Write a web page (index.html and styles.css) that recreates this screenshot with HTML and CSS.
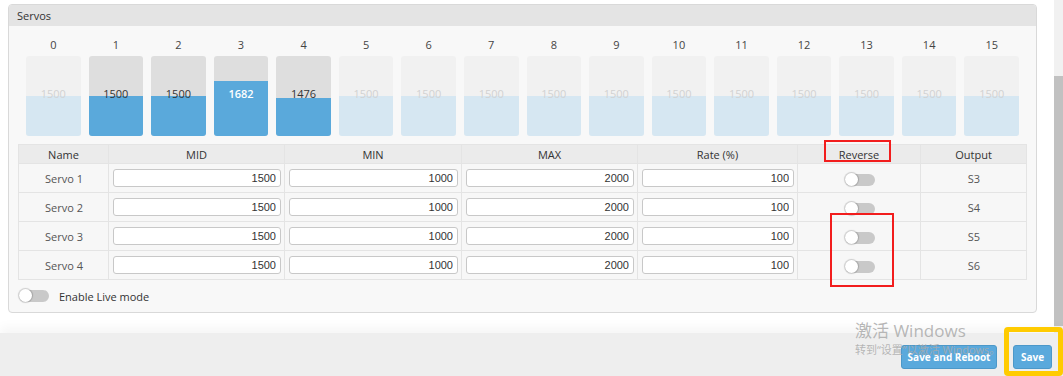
FILE: index.html
```html
<!DOCTYPE html>
<html lang="en">
<head>
<meta charset="UTF-8">
<meta name="viewport" content="width=device-width, initial-scale=1.0">
<title>Servos</title>
<link rel="stylesheet" href="styles.css">
</head>
<body>

  <div class="app">
    <main class="content">
      <section class="panel">
        <div class="panel-head">Servos</div>
        <div class="panel-body">

          <div class="bars">
            <div class="bar-col"><span class="ch">0</span><div class="bar"><div class="fill" style="height:50%"></div><span class="val">1500</span></div></div>
            <div class="bar-col"><span class="ch">1</span><div class="bar on"><div class="fill" style="height:50%"></div><span class="val">1500</span></div></div>
            <div class="bar-col"><span class="ch">2</span><div class="bar on"><div class="fill" style="height:50%"></div><span class="val">1500</span></div></div>
            <div class="bar-col"><span class="ch">3</span><div class="bar on high"><div class="fill" style="height:68.2%"></div><span class="val">1682</span></div></div>
            <div class="bar-col"><span class="ch">4</span><div class="bar on"><div class="fill" style="height:47.6%"></div><span class="val">1476</span></div></div>
            <div class="bar-col"><span class="ch">5</span><div class="bar"><div class="fill" style="height:50%"></div><span class="val">1500</span></div></div>
            <div class="bar-col"><span class="ch">6</span><div class="bar"><div class="fill" style="height:50%"></div><span class="val">1500</span></div></div>
            <div class="bar-col"><span class="ch">7</span><div class="bar"><div class="fill" style="height:50%"></div><span class="val">1500</span></div></div>
            <div class="bar-col"><span class="ch">8</span><div class="bar"><div class="fill" style="height:50%"></div><span class="val">1500</span></div></div>
            <div class="bar-col"><span class="ch">9</span><div class="bar"><div class="fill" style="height:50%"></div><span class="val">1500</span></div></div>
            <div class="bar-col"><span class="ch">10</span><div class="bar"><div class="fill" style="height:50%"></div><span class="val">1500</span></div></div>
            <div class="bar-col"><span class="ch">11</span><div class="bar"><div class="fill" style="height:50%"></div><span class="val">1500</span></div></div>
            <div class="bar-col"><span class="ch">12</span><div class="bar"><div class="fill" style="height:50%"></div><span class="val">1500</span></div></div>
            <div class="bar-col"><span class="ch">13</span><div class="bar"><div class="fill" style="height:50%"></div><span class="val">1500</span></div></div>
            <div class="bar-col"><span class="ch">14</span><div class="bar"><div class="fill" style="height:50%"></div><span class="val">1500</span></div></div>
            <div class="bar-col"><span class="ch">15</span><div class="bar"><div class="fill" style="height:50%"></div><span class="val">1500</span></div></div>
          </div>

          <table class="servo-table">
            <thead>
              <tr>
                <th class="c-name">Name</th>
                <th class="c-mid">MID</th>
                <th class="c-min">MIN</th>
                <th class="c-max">MAX</th>
                <th class="c-rate">Rate (%)</th>
                <th class="c-rev">Reverse</th>
                <th>Output</th>
              </tr>
            </thead>
            <tbody>
              <tr>
                <td>Servo 1</td>
                <td><input type="text" value="1500"></td>
                <td><input type="text" value="1000"></td>
                <td><input type="text" value="2000"></td>
                <td><input type="text" value="100"></td>
                <td><span class="switch"></span></td>
                <td>S3</td>
              </tr>
              <tr>
                <td>Servo 2</td>
                <td><input type="text" value="1500"></td>
                <td><input type="text" value="1000"></td>
                <td><input type="text" value="2000"></td>
                <td><input type="text" value="100"></td>
                <td><span class="switch"></span></td>
                <td>S4</td>
              </tr>
              <tr>
                <td>Servo 3</td>
                <td><input type="text" value="1500"></td>
                <td><input type="text" value="1000"></td>
                <td><input type="text" value="2000"></td>
                <td><input type="text" value="100"></td>
                <td><span class="switch"></span></td>
                <td>S5</td>
              </tr>
              <tr>
                <td>Servo 4</td>
                <td><input type="text" value="1500"></td>
                <td><input type="text" value="1000"></td>
                <td><input type="text" value="2000"></td>
                <td><input type="text" value="100"></td>
                <td><span class="switch"></span></td>
                <td>S6</td>
              </tr>
            </tbody>
          </table>

          <div class="live">
            <span class="switch"></span>
            <span>Enable Live mode</span>
          </div>

        </div>
      </section>
    </main>
    <div class="scrollbar"><div class="thumb"></div></div>
  </div>

  <footer class="footer">
    <button class="btn btn-reboot">Save and Reboot</button>
    <button class="btn btn-save">Save</button>
  </footer>

  <!-- overlays from the screenshot -->
  <div class="watermark">
    <div class="wm-title">激活 Windows</div>
    <div class="wm-sub">转到“设置”以激活 Windows。</div>
  </div>
  <div class="mark mark-head"></div>
  <div class="mark mark-toggles"></div>
  <div class="mark-save"></div>

</body>
</html>
```

FILE: styles.css
```css
html, body {
  margin: 0;
  padding: 0;
}

body {
  font-family: 'Open Sans', sans-serif;
  font-size: 11px;
  color: #333;
  background-color: #fff;
  width: 1063px;
  height: 376px;
  overflow: hidden;
  display: flex;
  flex-direction: column;
  position: relative;
}

.app {
  display: flex;
  height: 333px;
}

.content {
  flex: 1;
  min-width: 0;
  padding: 4px 17px 0 8px;
}

.scrollbar {
  width: 9px;
  background-color: #f1f1f1;
  display: flex;
  flex-direction: column;
  padding-top: 76px;
}

.thumb {
  height: 250px;
  background-color: #c1c1c1;
}

/* panel */

.panel {
  border: 1px solid #d9d9d9;
  border-radius: 4px;
  background-color: #f8f8f8;
  overflow: hidden;
}

.panel-head {
  height: 21px;
  line-height: 21px;
  padding-left: 8px;
  background-color: #e4e4e4;
  color: #333;
}

.panel-body {
  padding: 12px 9px 9px 9px;
}

/* bars */

.bars {
  display: grid;
  grid-template-columns: repeat(16, minmax(0, 1fr));
  column-gap: 8px;
  margin: 0 8px 8px 8px;
}

.bar-col {
  display: flex;
  flex-direction: column;
  align-items: center;
}

.ch {
  height: 14px;
  line-height: 14px;
  margin-bottom: 4px;
  color: #444;
}

.bar {
  position: relative;
  width: 100%;
  height: 80px;
  border-radius: 3px;
  background-color: #f1f1f1;
  overflow: hidden;
}

.bar .fill {
  position: absolute;
  left: 0;
  right: 0;
  bottom: 0;
  background-color: #d6e7f2;
}

.bar .val {
  position: absolute;
  left: 0;
  right: 0;
  top: 31px;
  text-align: center;
  line-height: 14px;
  color: #d2d2d2;
}

.bar.on {
  background-color: #dedede;
}

.bar.on .fill {
  background-color: #5aa9db;
}

.bar.on .val {
  color: #333;
}

.bar.high .val {
  color: #fff;
  font-weight: 600;
}

/* table */

.servo-table {
  width: 100%;
  border-collapse: collapse;
  table-layout: fixed;
}

.servo-table th,
.servo-table td {
  border: 1px solid #e4e4e4;
  text-align: center;
}

.servo-table th {
  height: 18px;
  padding: 0;
  font-weight: normal;
  background-color: #ebebeb;
  color: #333;
}

.servo-table td {
  height: 28px;
  padding: 0 3px 0 4px;
  background-color: #f7f7f7;
  color: #555;
}

.c-name { width: 89px; }
.c-mid { width: 175px; }
.c-min { width: 176px; }
.c-max { width: 175px; }
.c-rate { width: 159px; }
.c-rev { width: 122px; }

.servo-table input {
  display: block;
  width: 100%;
  height: 18px;
  box-sizing: border-box;
  border: 1px solid #c8c8c8;
  border-radius: 3px;
  padding: 0 4px;
  text-align: right;
  font-family: 'Liberation Sans', Arial, sans-serif;
  font-size: 11px;
  color: #333;
  background-color: #fff;
}

/* switches */

.switch {
  position: relative;
  display: inline-block;
  width: 30px;
  height: 12px;
  border-radius: 6px;
  background-color: #c9c9c9;
  vertical-align: middle;
}

.switch::before {
  content: "";
  position: absolute;
  left: 0;
  top: -1px;
  width: 13px;
  height: 13px;
  border-radius: 50%;
  background-color: #fff;
  box-shadow: 0 0 1px 1px rgba(0, 0, 0, 0.18);
}

.live {
  display: flex;
  align-items: center;
  gap: 10px;
  height: 14px;
  margin-top: 9px;
  padding-left: 1px;
}

/* footer */

.footer {
  height: 43px;
  box-sizing: border-box;
  background-color: #eee;
  box-shadow: 0 -6px 10px rgba(0, 0, 0, 0.04);
  display: flex;
  justify-content: flex-end;
  align-items: flex-start;
  gap: 16px;
  padding: 12px 11px 0 0;
}

.btn {
  height: 24px;
  padding: 0;
  border: 1px solid #4c98c9;
  border-radius: 3px;
  background-color: #5aa9dc;
  color: #fff;
  font-family: 'Open Sans', sans-serif;
  font-size: 10px;
  font-weight: 700;
  cursor: pointer;
}

.btn-reboot { width: 96px; }
.btn-save { width: 39px; }

/* overlays */

.watermark {
  position: absolute;
  left: 855px;
  top: 320px;
  color: rgba(170, 170, 170, 0.85);
  font-family: 'Open Sans', 'Noto Sans CJK SC', sans-serif;
  pointer-events: none;
}

.wm-title {
  font-size: 17px;
  line-height: 22px;
}

.wm-sub {
  font-size: 11px;
  line-height: 16px;
}

.mark {
  position: absolute;
  border: 2px solid #f21d1d;
  box-sizing: border-box;
}

.mark-head {
  left: 824px;
  top: 140px;
  width: 67px;
  height: 22px;
}

.mark-toggles {
  left: 830px;
  top: 213px;
  width: 64px;
  height: 74px;
}

.mark-save {
  position: absolute;
  left: 1004px;
  top: 327px;
  width: 59px;
  height: 49px;
  border: 5px solid #ffcb00;
  border-radius: 4px;
  box-sizing: border-box;
}
```
